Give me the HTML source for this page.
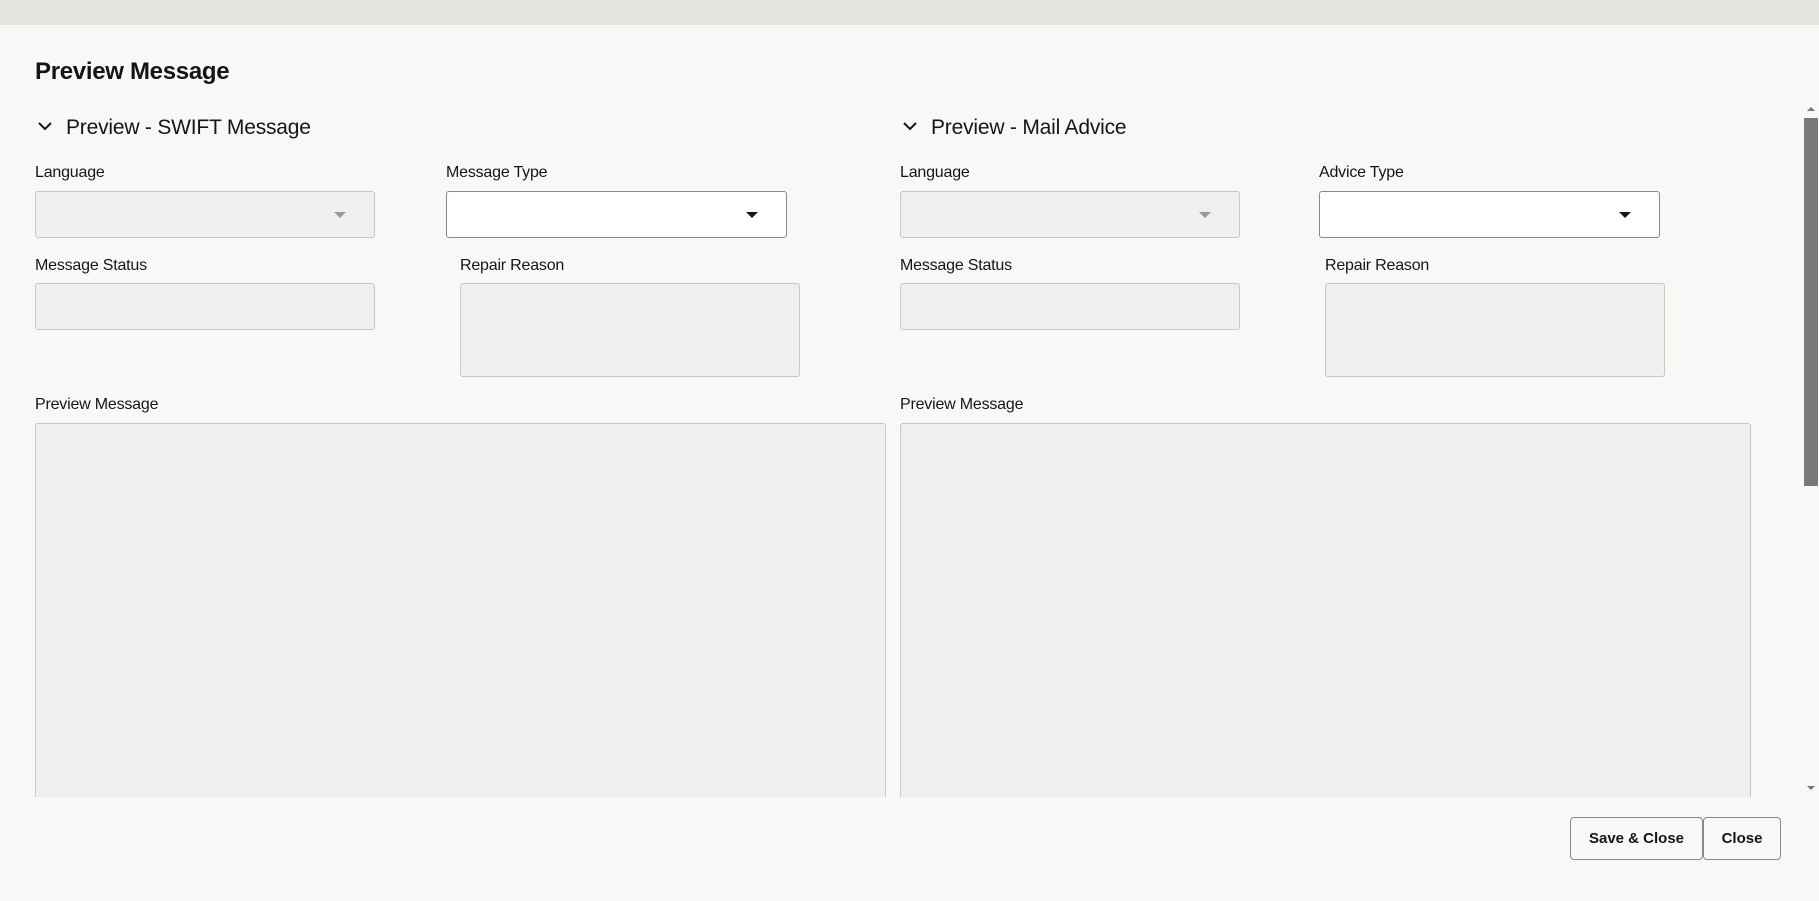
<!DOCTYPE html>
<html><head><meta charset="utf-8"><style>
*{box-sizing:border-box;margin:0;padding:0}
body{width:1819px;height:901px;background:#f9f8f6;font-family:"Liberation Sans",sans-serif;color:#161513;position:relative;overflow:hidden}
.top{position:absolute;left:0;top:0;width:1819px;height:25px;background:#e6e4e1}
.abs{position:absolute}
.title{left:35px;top:58px;font-size:24px;font-weight:bold;letter-spacing:-0.3px}
.sec{font-size:21px;top:116px;letter-spacing:-0.2px}
.lbl{font-size:16px;letter-spacing:-0.2px}
.box{position:absolute;background:#f0efed;border:1px solid #c9c7c4;border-radius:3px}
.sel{position:absolute;background:#fff;border:1px solid #8a8886;border-radius:3px}
.tri{position:absolute;right:28px;top:20px;width:0;height:0;border-left:6px solid transparent;border-right:6px solid transparent;border-top:6px solid #161513}
.tri.g{border-top-color:#9a9896}
.clip{position:absolute;left:0;top:0;width:1800px;height:797px;overflow:hidden}
.btn{position:absolute;top:817px;height:43px;border:1px solid #8a8886;border-radius:4px;background:#f9f8f6;font-size:15px;font-weight:bold;text-align:center;line-height:41px;color:#161513}
</style></head><body>
<div class="top"></div>
<div class="abs title">Preview Message</div>
<div class="clip">
<svg class="abs" style="left:37px;top:120px" width="16" height="12"><path d="M2 3 L8 9 L14 3" stroke="#161513" stroke-width="2" fill="none"/></svg>
<div class="abs sec" style="left:66px">Preview - SWIFT Message</div>
<svg class="abs" style="left:902px;top:120px" width="16" height="12"><path d="M2 3 L8 9 L14 3" stroke="#161513" stroke-width="2" fill="none"/></svg>
<div class="abs sec" style="left:931px">Preview - Mail Advice</div>

<div class="abs lbl" style="left:35px;top:164px">Language</div>
<div class="box" style="left:35px;top:191px;width:340px;height:47px"><div class="tri g"></div></div>
<div class="abs lbl" style="left:446px;top:164px">Message Type</div>
<div class="sel" style="left:446px;top:191px;width:341px;height:47px"><div class="tri"></div></div>
<div class="abs lbl" style="left:35px;top:257px">Message Status</div>
<div class="box" style="left:35px;top:283px;width:340px;height:47px"></div>
<div class="abs lbl" style="left:460px;top:257px">Repair Reason</div>
<div class="box" style="left:460px;top:283px;width:340px;height:94px"></div>
<div class="abs lbl" style="left:35px;top:396px">Preview Message</div>
<div class="box" style="left:35px;top:423px;width:851px;height:420px"></div>

<div class="abs lbl" style="left:900px;top:164px">Language</div>
<div class="box" style="left:900px;top:191px;width:340px;height:47px"><div class="tri g"></div></div>
<div class="abs lbl" style="left:1319px;top:164px">Advice Type</div>
<div class="sel" style="left:1319px;top:191px;width:341px;height:47px"><div class="tri"></div></div>
<div class="abs lbl" style="left:900px;top:257px">Message Status</div>
<div class="box" style="left:900px;top:283px;width:340px;height:47px"></div>
<div class="abs lbl" style="left:1325px;top:257px">Repair Reason</div>
<div class="box" style="left:1325px;top:283px;width:340px;height:94px"></div>
<div class="abs lbl" style="left:900px;top:396px">Preview Message</div>
<div class="box" style="left:900px;top:423px;width:851px;height:420px"></div>
</div>
<div class="abs" style="left:1804px;top:118px;width:14px;height:368px;background:#7a7978"></div>
<div class="abs" style="left:1807px;top:107px;width:0;height:0;border-left:4px solid transparent;border-right:4px solid transparent;border-bottom:4px solid #777"></div>
<div class="abs" style="left:1807px;top:786px;width:0;height:0;border-left:4px solid transparent;border-right:4px solid transparent;border-top:4px solid #777"></div>
<div class="btn" style="left:1570px;width:133px">Save &amp; Close</div>
<div class="btn" style="left:1703px;width:78px">Close</div>
</body></html>
